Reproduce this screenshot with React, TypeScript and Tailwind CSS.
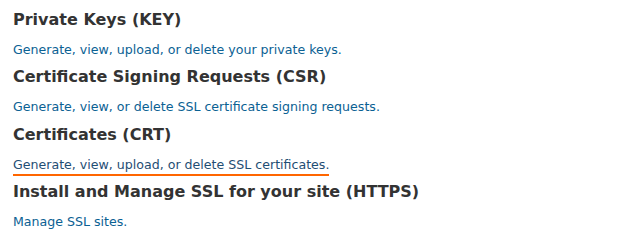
const sections = [
  { title: "Private Keys (KEY)", link: "Generate, view, upload, or delete your private keys." },
  { title: "Certificate Signing Requests (CSR)", link: "Generate, view, or delete SSL certificate signing requests." },
  { title: "Certificates (CRT)", link: "Generate, view, upload, or delete SSL certificates.", active: true },
  { title: "Install and Manage SSL for your site (HTTPS)", link: "Manage SSL sites." },
];

export default function App() {
  return (
    <div className="w-[640px] h-[231px] bg-white px-[13px] pt-[10px] font-['Verdana','DejaVu_Sans',sans-serif]">
      {sections.map((s) => (
        <div key={s.title} className="h-[57.33px]">
          <h2 className="text-[16px] font-bold leading-[20px] text-[#333]">{s.title}</h2>
          <a
            href="#"
            className={`inline-block mt-[12px] text-[12.6px] leading-[16px] ${
              s.active ? "text-[#1f4e74] border-b-2 border-[#f60] pb-[1px]" : "text-[#0b6193]"
            }`}
          >
            {s.link}
          </a>
        </div>
      ))}
    </div>
  );
}
